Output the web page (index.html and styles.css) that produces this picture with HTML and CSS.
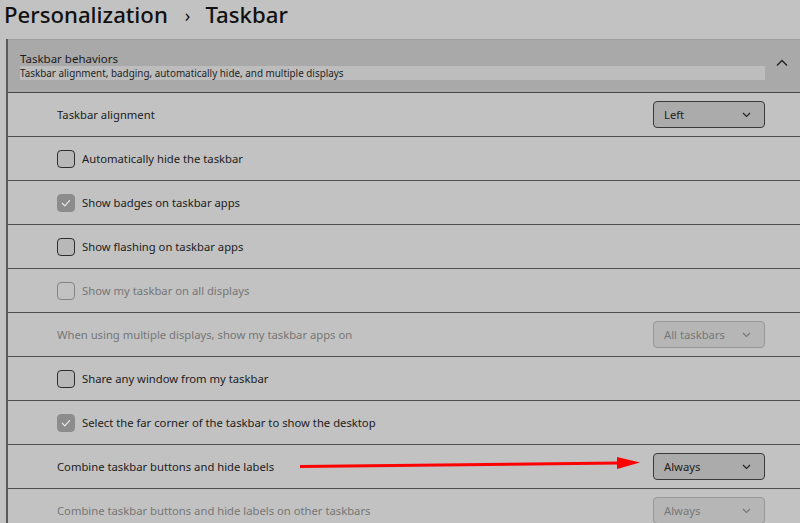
FILE: index.html
```html
<!DOCTYPE html>
<html>
<head>
<meta charset="utf-8">
<link rel="stylesheet" href="styles.css">
</head>
<body>
<h1 class="title"><span>Personalization</span><span class="crumb-sep">›</span><span>Taskbar</span></h1>
<section class="panel">
  <div class="panel-head">
    <div class="head-text">
      <div class="head-title">Taskbar behaviors</div>
      <div class="head-sub">Taskbar alignment, badging, automatically hide, and multiple displays</div>
    </div>
    <svg class="chev-up" width="12" height="8" viewBox="0 0 12 8"><path d="M1 6.5 L6 1.5 L11 6.5" fill="none" stroke="#222" stroke-width="1.3"/></svg>
  </div>

  <div class="row">
    <span class="label">Taskbar alignment</span>
    <div class="select"><span>Left</span><svg width="9" height="6" viewBox="0 0 9 6"><path d="M1 1 L4.5 4.5 L8 1" fill="none" stroke="#222" stroke-width="1.2"/></svg></div>
  </div>
  <div class="row">
    <span class="check"></span><span class="label">Automatically hide the taskbar</span>
  </div>
  <div class="row">
    <span class="check checked"><svg width="12" height="10" viewBox="0 0 12 10"><path d="M2 5 L4.8 7.8 L10 2.2" fill="none" stroke="#e6e6e6" stroke-width="1.2"/></svg></span><span class="label">Show badges on taskbar apps</span>
  </div>
  <div class="row">
    <span class="check"></span><span class="label">Show flashing on taskbar apps</span>
  </div>
  <div class="row disabled">
    <span class="check"></span><span class="label">Show my taskbar on all displays</span>
  </div>
  <div class="row disabled">
    <span class="label">When using multiple displays, show my taskbar apps on</span>
    <div class="select"><span>All taskbars</span><svg width="9" height="6" viewBox="0 0 9 6"><path d="M1 1 L4.5 4.5 L8 1" fill="none" stroke="#777" stroke-width="1.2"/></svg></div>
  </div>
  <div class="row">
    <span class="check"></span><span class="label">Share any window from my taskbar</span>
  </div>
  <div class="row">
    <span class="check checked"><svg width="12" height="10" viewBox="0 0 12 10"><path d="M2 5 L4.8 7.8 L10 2.2" fill="none" stroke="#e6e6e6" stroke-width="1.2"/></svg></span><span class="label">Select the far corner of the taskbar to show the desktop</span>
  </div>
  <div class="row">
    <span class="label">Combine taskbar buttons and hide labels</span>
    <div class="select"><span>Always</span><svg width="9" height="6" viewBox="0 0 9 6"><path d="M1 1 L4.5 4.5 L8 1" fill="none" stroke="#222" stroke-width="1.2"/></svg></div>
  </div>
  <div class="row disabled">
    <span class="label">Combine taskbar buttons and hide labels on other taskbars</span>
    <div class="select"><span>Always</span><svg width="9" height="6" viewBox="0 0 9 6"><path d="M1 1 L4.5 4.5 L8 1" fill="none" stroke="#777" stroke-width="1.2"/></svg></div>
  </div>
</section>
<svg class="arrow" width="800" height="523" viewBox="0 0 800 523">
  <path d="M300 466.5 L620 463" stroke="#f00" stroke-width="3" fill="none"/>
  <polygon points="617,457 640,462.5 617,469" fill="#f00"/>
</svg>
</body>
</html>
```
FILE: styles.css
```css
html, body {
  margin: 0;
  padding: 0;
}
body {
  width: 800px;
  height: 523px;
  overflow: hidden;
  background: #c2c2c2;
  font-family: "Noto Sans", "Open Sans", sans-serif;
  color: #1c1c1c;
  position: relative;
}
.title {
  margin: 0;
  height: 39px;
  padding-left: 4px;
  font-size: 22.2px;
  font-weight: 500;
  line-height: 30px;
  display: flex;
  align-items: flex-start;
  color: #111;
}
.crumb-sep {
  font-size: 18px;
  margin: 0 15px 0 17px;
  font-weight: 400;
}
.panel {
  margin-left: 6px;
  border-left: 2px solid #5a5a5a;
}
.panel-head {
  height: 52px;
  background: #a9a9a9;
  border-top: 1px solid #9e9e9e;
  border-bottom: 1px solid #474747;
  display: flex;
  align-items: center;
  padding-left: 12px;
}
.head-text {
  flex: 0 0 auto;
  width: 745px;
  margin-top: -1px;
}
.head-title {
  font-size: 11.5px;
  line-height: 14px;
  color: #1c1c1c;
}
.head-sub {
  font-size: 9.9px;
  line-height: 14px;
  background: #bdbdbd;
  color: #1e1e1e;
}
.chev-up {
  margin-left: 11px;
  margin-top: -6px;
}
.row {
  height: 43px;
  border-bottom: 1px solid #4e4e4e;
  display: flex;
  align-items: center;
  padding-left: 49px;
  padding-right: 35px;
  font-size: 11.25px;
}
.label {
  flex: 1 1 auto;
  margin-top: -1px;
}
.check {
  width: 16px;
  height: 16px;
  border: 1px solid #2e2e2e;
  border-radius: 4px;
  background: #b8b8b8;
  margin-right: 7px;
  display: flex;
  align-items: center;
  justify-content: center;
  box-sizing: content-box;
}
.check.checked {
  background: #8c8c8c;
  border-color: #8c8c8c;
}
.select {
  border: 1px solid #3a3a3a;
  border-radius: 4px;
  background: #ababab;
  display: flex;
  align-items: center;
  justify-content: space-between;
  padding: 0 13px 0 10px;
  box-sizing: border-box;
  width: 112px;
  height: 27px;
}
.disabled {
  color: #767676;
}
.disabled .check {
  border-color: #858585;
  background: transparent;
}
.disabled .select {
  border-color: #979797;
  background: #b6b6b6;
}
.arrow {
  position: absolute;
  left: 0;
  top: 0;
  pointer-events: none;
}
```
